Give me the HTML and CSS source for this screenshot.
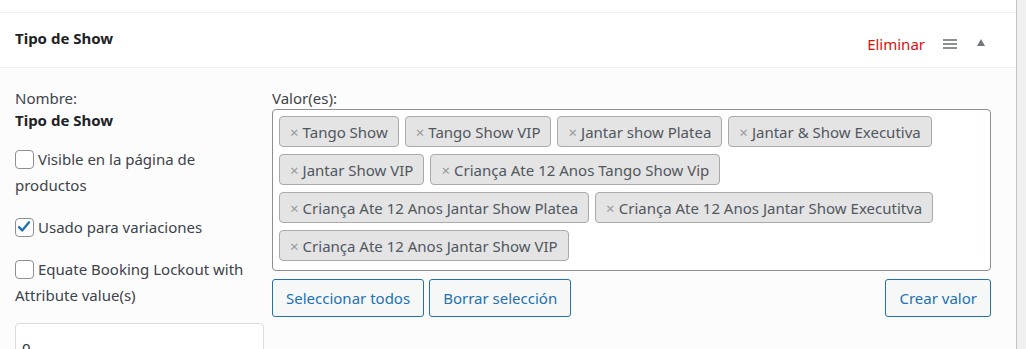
FILE: index.html
```html
<!DOCTYPE html>
<html lang="es">
<head>
  <meta charset="UTF-8">
  <meta name="viewport" content="width=device-width, initial-scale=1.0">
  <title>Tipo de Show</title>
  <link rel="stylesheet" href="styles.css">
</head>
<body>
  <div class="panel">
    <div class="top-strip"></div>

    <!-- Attribute header -->
    <div class="attr-header">
      <strong class="attr-title">Tipo de Show</strong>
      <div class="attr-actions">
        <a href="#" class="remove-row">Eliminar</a>
        <span class="sort-handle" title="Arrastrar">
          <span></span><span></span><span></span>
        </span>
        <span class="toggle-arrow"></span>
      </div>
    </div>

    <!-- Attribute body -->
    <div class="attr-body">
      <div class="attr-left">
        <div class="attr-name">
          <span>Nombre:</span>
          <strong>Tipo de Show</strong>
        </div>
        <label class="check-line">
          <span class="checkbox"></span>Visible en la página de productos
        </label>
        <label class="check-line">
          <span class="checkbox checked">
            <svg viewBox="0 0 20 20" width="18" height="18"><path d="M4.5 10.2 8 13.8 15.6 4.8" fill="none" stroke="#2271b1" stroke-width="2.6" stroke-linecap="round" stroke-linejoin="round"/></svg>
          </span>Usado para variaciones
        </label>
        <label class="check-line">
          <span class="checkbox"></span>Equate Booking Lockout with Attribute value(s)
        </label>
        <input type="text" class="lockout-input" value="0">
      </div>

      <div class="attr-right">
        <label class="values-label">Valor(es):</label>
        <div class="values-box">
          <span class="chip"><span class="chip-x">×</span>Tango Show</span>
          <span class="chip"><span class="chip-x">×</span>Tango Show VIP</span>
          <span class="chip"><span class="chip-x">×</span>Jantar show Platea</span>
          <span class="chip"><span class="chip-x">×</span>Jantar &amp; Show Executiva</span>
          <span class="chip"><span class="chip-x">×</span>Jantar Show VIP</span>
          <span class="chip"><span class="chip-x">×</span>Criança Ate 12 Anos Tango Show Vip</span>
          <span class="chip"><span class="chip-x">×</span>Criança Ate 12 Anos Jantar Show Platea</span>
          <span class="chip"><span class="chip-x">×</span>Criança Ate 12 Anos Jantar Show Executitva</span>
          <span class="chip"><span class="chip-x">×</span>Criança Ate 12 Anos Jantar Show VIP</span>
        </div>
        <div class="value-buttons">
          <button type="button" class="btn">Seleccionar todos</button>
          <button type="button" class="btn">Borrar selección</button>
          <button type="button" class="btn btn-right">Crear valor</button>
        </div>
      </div>
    </div>
  </div>
</body>
</html>
```

FILE: styles.css
```css
/* Basic Reset */
* {
  margin: 0;
  padding: 0;
  box-sizing: border-box;
  font-family: "Noto Sans", "Open Sans", sans-serif;
}

body {
  background-color: #f0f0f1;
  color: #3c434a;
  font-size: 15px;
  overflow: hidden;
}

.panel {
  width: 1017px;
  height: 349px;
  background-color: #fcfcfc;
  border-right: 1px solid #c3c4c7;
}

.top-strip {
  height: 13px;
  background-color: #fff;
  border-bottom: 1px solid #eee;
}

/* Header */
.attr-header {
  height: 55px;
  padding: 0 15px;
  background-color: #fff;
  border-bottom: 1px solid #eee;
  display: flex;
  align-items: center;
  justify-content: space-between;
}

.attr-title {
  font-size: 15px;
  font-weight: 700;
  color: #1d2327;
  margin-top: -4px;
}

.attr-actions {
  display: flex;
  align-items: center;
  padding-right: 16px;
  margin-top: 7px;
}

.remove-row {
  color: #e00d0d;
  text-decoration: none;
  font-size: 15px;
  margin-right: 18px;
}

.sort-handle {
  display: flex;
  flex-direction: column;
  gap: 2px;
  width: 14px;
  margin-right: 20px;
}

.sort-handle span {
  height: 2px;
  background-color: #8c8f94;
}

.toggle-arrow {
  width: 0;
  height: 0;
  border-left: 4.5px solid transparent;
  border-right: 4.5px solid transparent;
  border-bottom: 7px solid #72777c;
  margin-top: -3px;
}

/* Body */
.attr-body {
  display: flex;
  gap: 8px;
  padding: 19px 25px 0 15px;
}

.attr-left {
  width: 249px;
  flex-shrink: 0;
}

.attr-name {
  display: flex;
  flex-direction: column;
  line-height: 22px;
}

.attr-name strong {
  color: #1d2327;
  font-weight: 700;
}

.check-line {
  display: block;
  line-height: 26px;
  margin-top: 15px;
}

.check-line + .check-line {
  margin-top: 16px;
}

.checkbox {
  display: inline-block;
  width: 19px;
  height: 19px;
  border: 1px solid #8c8f94;
  border-radius: 4px;
  background-color: #fff;
  vertical-align: -4px;
  margin-right: 4px;
  position: relative;
}

.checkbox svg {
  position: absolute;
  left: -1px;
  top: -1px;
}

.lockout-input {
  display: block;
  width: 249px;
  height: 40px;
  margin-top: 15px;
  padding: 10px 6px 0;
  border: 1px solid #ddd;
  border-radius: 4px;
  background-color: #fff;
  color: #2c3338;
  font-size: 15px;
  outline: none;
}

.attr-right {
  flex: 1;
}

.values-label {
  display: block;
  line-height: 22px;
}

.values-box {
  display: flex;
  flex-wrap: wrap;
  align-content: flex-start;
  gap: 7px 6px;
  height: 162px;
  padding: 6px 6px 0;
  border: 1px solid #8c8f94;
  border-radius: 4px;
  background-color: #fff;
}

.chip {
  display: inline-flex;
  align-items: center;
  height: 31px;
  padding: 0 10px;
  background-color: #e4e4e4;
  border: 1px solid #aaa;
  border-radius: 4px;
  color: #50575e;
  font-size: 15px;
  white-space: nowrap;
}

.chip-x {
  color: #999;
  font-size: 15px;
  margin-right: 4px;
}

.value-buttons {
  display: flex;
  gap: 5px;
  margin-top: 8px;
}

.btn {
  height: 38px;
  padding: 0 13px;
  background-color: #f6f7f7;
  border: 1px solid #2271b1;
  border-radius: 3px;
  color: #2271b1;
  font-size: 15px;
  cursor: pointer;
}

.btn-right {
  margin-left: auto;
}
```
